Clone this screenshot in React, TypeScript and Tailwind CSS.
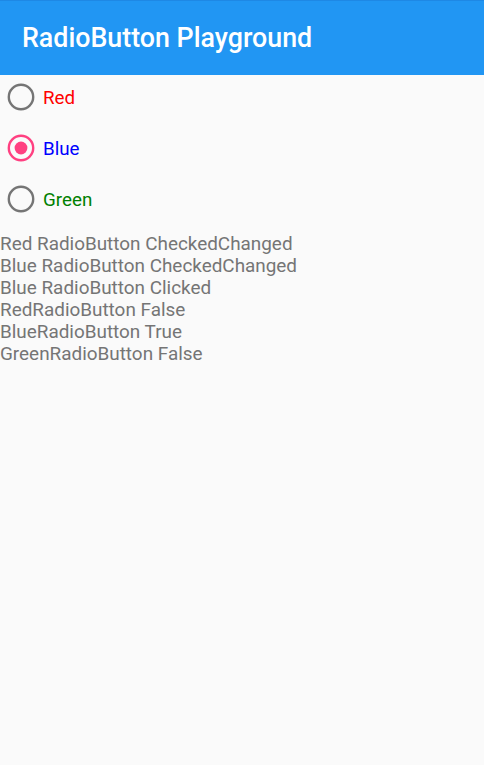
import { useState } from 'react'

const options = [
  { key: 'Red', color: 'text-[#ff0000]' },
  { key: 'Blue', color: 'text-[#0000ff]' },
  { key: 'Green', color: 'text-[#008000]' },
]

const log = [
  'Red RadioButton CheckedChanged',
  'Blue RadioButton CheckedChanged',
  'Blue RadioButton Clicked',
  'RedRadioButton False',
  'BlueRadioButton True',
  'GreenRadioButton False',
]

function Radio({ checked }: { checked: boolean }) {
  return (
    <svg width="28" height="28" viewBox="0 0 28 28">
      <circle
        cx="14"
        cy="14"
        r="12.2"
        fill="none"
        stroke={checked ? '#ff4081' : '#757575'}
        strokeWidth="2.4"
      />
      {checked && <circle cx="14" cy="14" r="6.4" fill="#ff4081" />}
    </svg>
  )
}

export default function App() {
  const [selected, setSelected] = useState('Blue')

  return (
    <div className="min-h-[765px] bg-[#fafafa] font-['Roboto',sans-serif]">
      <div className="h-[75px] bg-[#2196f3] flex items-center px-[22px] border-t border-[#1e88e5]">
        <span className="text-white text-[26.8px] font-medium">RadioButton Playground</span>
      </div>

      <div className="flex flex-col gap-[23px] pt-[8px]">
        {options.map(o => (
          <button
            key={o.key}
            onClick={() => setSelected(o.key)}
            className="h-[28px] flex items-center gap-[8px] pl-[7px] text-left"
          >
            <Radio checked={selected === o.key} />
            <span className={`text-[18.8px] pt-[2px] ${o.color}`}>{o.key}</span>
          </button>
        ))}
      </div>

      <div className="flex flex-col text-[18.9px] leading-[22px] text-[#757575] pt-[20px]">
        {log.map((l, i) => (
          <span key={i}>{l}</span>
        ))}
      </div>
    </div>
  )
}
